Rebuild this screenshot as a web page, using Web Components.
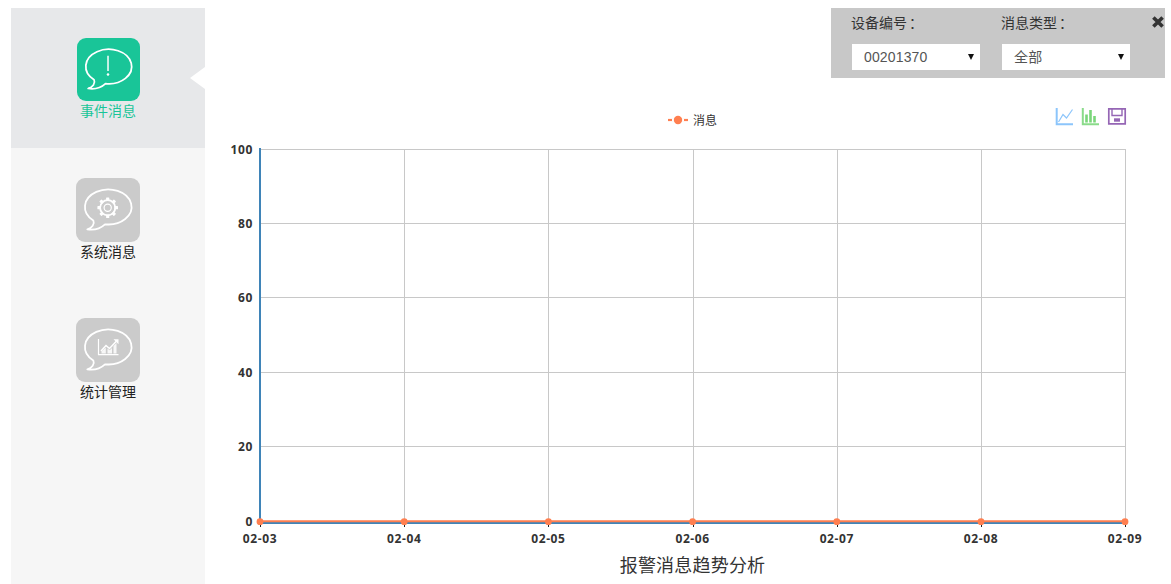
<!DOCTYPE html>
<html lang="zh-CN">
<head>
<meta charset="utf-8">
<title>报警消息趋势分析</title>
<style>
html,body{margin:0;padding:0;height:100%;overflow:hidden;background:#fff}
body{font-family:"Liberation Sans","Noto Sans CJK SC",sans-serif;font-size:14px;color:#333}
</style>
</head>
<body>
<app-shell>
  <side-nav slot="nav">
    <nav-item active label="事件消息" icon="alert"></nav-item>
    <nav-item label="系统消息" icon="gear"></nav-item>
    <nav-item label="统计管理" icon="stats"></nav-item>
  </side-nav>
  <trend-chart></trend-chart>
  <filter-panel slot="overlay">
    <filter-select label="设备编号" value="00201370"></filter-select>
    <filter-select label="消息类型" value="全部"></filter-select>
  </filter-panel>
</app-shell>
<script>
class AppShell extends HTMLElement{
  constructor(){super();this.attachShadow({mode:'open'}).innerHTML=`
  <style>
    :host{display:flex;height:584px;width:1171px;position:relative;overflow:hidden}
    .nav{display:block;flex:0 0 194px;margin:8px 0 0 11px}
    .main{flex:1;min-width:0}
    .over{position:absolute;top:8px;left:831px}
  </style>
  <div class="nav"><slot name="nav"></slot></div>
  <div class="main"><slot></slot></div>
  <div class="over"><slot name="overlay"></slot></div>`;}
}
class SideNav extends HTMLElement{
  constructor(){super();this.attachShadow({mode:'open'}).innerHTML=`
  <style>:host{display:flex;flex-direction:column;height:576px;background:#f6f6f6}</style><slot></slot>`;}
}
const BUBBLE='<path d="M29 46.3A23.3 17.5 0 1 0 17.3 42.4C19 46 16 50 11.3 51.3C18 52.3 25 50 29 46.3Z" fill="none" stroke="#fff" stroke-width="1.8" stroke-linejoin="round"/>';
const GLYPHS={
  alert:'<path d="M31.5 18V33.5" stroke="#fff" stroke-width="1.5"/><circle cx="31.5" cy="37" r="1.3" fill="#fff"/>',
  gear:(()=>{let t='';for(let i=0;i<8;i++){t+=`<rect x="30.1" y="19.4" width="3.2" height="3.6" rx=".6" fill="#fff" transform="rotate(${i*45} 31.7 29.7)"/>`;}
    return t+'<circle cx="31.7" cy="29.7" r="7.6" fill="none" stroke="#fff" stroke-width="1.8"/><circle cx="31.7" cy="29.7" r="3.6" fill="none" stroke="#fff" stroke-width="1.2"/>';})(),
  stats:'<path d="M22.5 21V36.6H42.5" fill="none" stroke="#fff" stroke-width="1.2"/><path d="M25 33L30 27.5L33.5 30.5L41 22.5" fill="none" stroke="#fff" stroke-width="1.5"/><path d="M37.5 21.3H42.5V26.3Z" fill="#fff"/><path d="M25.5 35.5V33.5L29.8 29.5V35.5ZM31.5 35.5V30.5L33.7 32.3L36 30V35.5ZM37.5 35.5V28L40.5 25V35.5Z" fill="#fff" opacity=".85"/>'
};
class NavItem extends HTMLElement{
  connectedCallback(){
    const active=this.hasAttribute('active');
    const name=this.getAttribute('icon');
    this.attachShadow({mode:'open'}).innerHTML=`
    <style>
      :host{display:flex;flex-direction:column;align-items:center;height:140px;box-sizing:border-box;position:relative;
        padding-top:30px;background:${active?'#e7e8ea':'transparent'}}
      .icon{display:block;flex:none;width:${active?63:64}px;height:${active?63:64}px;margin-left:${active?1:0}px;border-radius:9px;background:${active?'#19c598':'#cbcbcb'}}
      .label{font:14px/20px "Noto Sans CJK SC","Liberation Sans",sans-serif;margin-top:-1px;color:${active?'#19c598':'#222'}}
      .notch{position:absolute;right:0;top:59px;width:0;height:0;border:11px solid transparent;border-left:0;border-right:15px solid #fff}
    </style>
    <svg class="icon" viewBox="0 0 64 64" aria-hidden="true">${BUBBLE}${GLYPHS[name]}</svg>
    <div class="label">${this.getAttribute('label')}</div>
    ${active?'<div class="notch"></div>':''}`;
  }
}
class FilterPanel extends HTMLElement{
  constructor(){super();this.attachShadow({mode:'open'}).innerHTML=`
  <style>
    :host{display:flex;position:relative;box-sizing:border-box;width:334px;height:70px;background:#c8c8c8;padding:6px 0 0 21px;gap:22px}
    .x{position:absolute;right:0;top:7px;width:14px;height:14px}
  </style>
  <slot></slot>
  <svg class="x" viewBox="0 0 14 14" aria-label="close"><path d="M2.4 2.4L11.6 11.6M11.6 2.4L2.4 11.6" stroke="#333" stroke-width="3.6"/></svg>`;}
}
class FilterSelect extends HTMLElement{
  connectedCallback(){
    this.attachShadow({mode:'open'}).innerHTML=`
    <style>
      :host{display:flex;flex-direction:column;width:128px}
      .l{font:14px/16px "Noto Sans CJK SC","Liberation Sans",sans-serif;color:#333;height:30px;margin-left:-1px}
      .c{margin-left:2px}
      .s{display:flex;align-items:center;justify-content:space-between;box-sizing:border-box;height:26px;background:#fff;padding:0 6px 0 12px;
        font:14px/26px "Liberation Sans","Noto Sans CJK SC",sans-serif;color:#555;letter-spacing:.15px}
      .a{width:0;height:0;border:3.2px solid transparent;border-bottom:0;border-top:6px solid #111}
    </style>
    <div class="l">${this.getAttribute('label')}<span class="c">：</span></div>
    <div class="s"><span>${this.getAttribute('value')}</span><i class="a"></i></div>`;
  }
}
class TrendChart extends HTMLElement{
  connectedCallback(){
    const xs=[260,404.2,548.4,692.6,836.8,981,1125];
    const ys=[149,223,297.5,372,446.5,521.5];
    const xl=['02-03','02-04','02-05','02-06','02-07','02-08','02-09'];
    const yl=['100','80','60','40','20','0'];
    let g='';
    xs.slice(1).forEach(x=>g+=`<path d="M${Math.round(x)+.5} 149V522" stroke="#c8c8c8"/>`);
    ys.slice(0,5).forEach(y=>g+=`<path d="M260 ${Math.floor(y)+.5}H1125.5" stroke="#c8c8c8"/>`);
    let t='';
    xs.forEach((x,i)=>{
      t+=`<path d="M${Math.round(x)+.5} 523V527" stroke="#222"/>`;
      t+=`<text class="ax" x="${x}" y="542.5" text-anchor="middle">${xl[i]}</text>`;
    });
    ys.forEach((y,i)=>{t+=`<text class="ax" x="253" y="${y+4.6}" text-anchor="end">${yl[i]}</text>`;});
    const dots=xs.map(x=>`<circle cx="${x}" cy="521.7" r="3.4" fill="#ff7f50"/>`).join('');
    this.attachShadow({mode:'open'}).innerHTML=`
    <style>
      :host{display:block;width:966px;height:584px}
      svg{display:block}
      text{font-family:"Noto Sans CJK SC","Liberation Sans",sans-serif}
      .ax{font:700 12px "Open Sans","Noto Sans",sans-serif;letter-spacing:.6px;fill:#333}
      .lg{font-size:12px;fill:#333}
      .tt{font-size:18px;fill:#333;letter-spacing:.2px}
    </style>
    <svg width="966" height="584" viewBox="205 0 966 584" role="img">
      ${g}
      <path d="M260 523H1125.5" stroke="#3f84b8" stroke-width="2"/>
      <path d="M260 148V524" stroke="#3f84b8" stroke-width="2"/>
      ${t}
      <path d="M260 521.2H1125" stroke="#ff7f50" stroke-width="2"/>
      ${dots}
      <path d="M668 120H688" stroke="#ff7f50" stroke-width="2.2" />
      <path d="M672 120H684" stroke="#fff" stroke-width="3"/>
      <circle cx="678" cy="120" r="4.2" fill="#ff7f50"/>
      <text class="lg" x="693" y="124.5">消息</text>
      <g fill="none" stroke-width="1.5">
        <path d="M1056.7 108V124.3H1073" stroke="#8cc5fb" stroke-width="2"/>
        <path d="M1058.5 122L1063 114.5L1066.5 118L1072.5 109.5" stroke="#8cc5fb" stroke-width="1.2"/>
        <path d="M1082.8 108V124.3H1099" stroke="#8adb8a" stroke-width="2"/>
        <path d="M1086.5 114.5V122.5M1090.5 110V122.5M1094.5 116V122.5" stroke="#7ad67a" stroke-width="2.6"/>
        <path d="M1108.8 108.8H1125.2V123.8H1108.8Z" stroke="#9566b5" stroke-width="1.7"/>
        <path d="M1112 109V115.5H1122V109" stroke="#9566b5" stroke-width="1.4"/>
        <path d="M1114 120H1120" stroke="#9566b5" stroke-width="3.4"/>
      </g>
      <text class="tt" x="692.5" y="572" text-anchor="middle">报警消息趋势分析</text>
    </svg>`;
  }
}
customElements.define('app-shell',AppShell);
customElements.define('side-nav',SideNav);
customElements.define('nav-item',NavItem);
customElements.define('filter-panel',FilterPanel);
customElements.define('filter-select',FilterSelect);
customElements.define('trend-chart',TrendChart);
</script>
</body>
</html>
